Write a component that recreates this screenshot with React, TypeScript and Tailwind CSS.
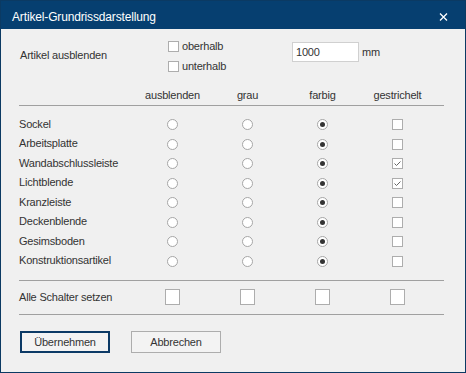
const rows = [
  { name: 'Sockel', dashed: false },
  { name: 'Arbeitsplatte', dashed: false },
  { name: 'Wandabschlussleiste', dashed: true },
  { name: 'Lichtblende', dashed: true },
  { name: 'Kranzleiste', dashed: false },
  { name: 'Deckenblende', dashed: false },
  { name: 'Gesimsboden', dashed: false },
  { name: 'Konstruktionsartikel', dashed: false },
];

function Radio({ checked }: { checked?: boolean }) {
  return (
    <span className="flex h-[11px] w-[11px] items-center justify-center rounded-full border border-[#a6a6a6] bg-white">
      {checked && <span className="h-[5px] w-[5px] rounded-full bg-[#333333]" />}
    </span>
  );
}

function Check({ checked, big }: { checked?: boolean; big?: boolean }) {
  return (
    <span
      className={
        big
          ? 'flex h-[16px] w-[15px] items-center justify-center border border-[#adadad] bg-white'
          : 'flex h-[11px] w-[11px] items-center justify-center border border-[#adadad] bg-white'
      }
    >
      {checked && (
        <svg width="9" height="9" viewBox="0 0 9 9">
          <path d="M1.5 4.5 L3.5 6.5 L7.5 2.5" fill="none" stroke="#666666" strokeWidth="1" />
        </svg>
      )}
    </span>
  );
}

function Cell({ children }: { children: React.ReactNode }) {
  return <div className="flex items-center justify-center">{children}</div>;
}

export default function App() {
  return (
    <div
      className="flex h-[373px] w-[466px] flex-col border border-[#0b3a63] bg-[#f0f0f0] text-[11px] tracking-[-0.2px] text-[#333333]"
      style={{ fontFamily: '"Liberation Sans", Arial, sans-serif' }}
    >
      <div className="flex h-[28px] items-center justify-between bg-[#063f70] pl-[11px] pr-[17px] pt-[4px] text-white">
        <span className="text-[12px] tracking-[-0.15px]">Artikel-Grundrissdarstellung</span>
        <svg width="9" height="8" viewBox="0 0 9 8">
          <path d="M1 0.5 L8 7.5 M8 0.5 L1 7.5" stroke="white" strokeWidth="1.3" />
        </svg>
      </div>

      <div className="flex flex-col pl-[18px]">
        <div className="flex pt-[7px]">
          <div className="flex w-[149px] items-center pl-[1px] pb-[2px]">Artikel ausblenden</div>
          <div className="flex w-[124px] flex-col">
            <label className="flex h-[20px] items-center gap-[3px]">
              <Check />
              <span>oberhalb</span>
            </label>
            <label className="flex h-[20px] items-center gap-[3px]">
              <Check />
              <span>unterhalb</span>
            </label>
          </div>
          <div className="mt-[6px] flex h-[20px] items-center gap-[3px] self-start">
            <div className="flex h-[20px] w-[67px] items-center border border-[#d0d0d0] bg-white pl-[3px]">1000</div>
            <span>mm</span>
          </div>
        </div>

        <div className="mt-[9px] grid h-[20px] grid-cols-[116px_75px_75px_75px_75px] items-center">
          <div />
          <div className="text-center">ausblenden</div>
          <div className="text-center">grau</div>
          <div className="text-center">farbig</div>
          <div className="text-center">gestrichelt</div>
        </div>
        <div className="h-px w-[425px] bg-[#a0a0a0]" />

        <div className="mt-[9px] flex flex-col">
          {rows.map((r) => (
            <div key={r.name} className="grid h-[19.5px] grid-cols-[116px_75px_75px_75px_75px] items-center">
              <div className="pb-[2px]">{r.name}</div>
              <Cell>
                <Radio />
              </Cell>
              <Cell>
                <Radio />
              </Cell>
              <Cell>
                <Radio checked />
              </Cell>
              <Cell>
                <Check checked={r.dashed} />
              </Cell>
            </div>
          ))}
        </div>
        <div className="mt-[9px] h-px w-[425px] bg-[#a0a0a0]" />

        <div className="mt-[8px] grid h-[16px] grid-cols-[116px_75px_75px_75px_75px] items-center">
          <div>Alle Schalter setzen</div>
          <Cell>
            <Check big />
          </Cell>
          <Cell>
            <Check big />
          </Cell>
          <Cell>
            <Check big />
          </Cell>
          <Cell>
            <Check big />
          </Cell>
        </div>
        <div className="mt-[9px] h-px w-[425px] bg-[#a0a0a0]" />

        <div className="mt-[16px] flex gap-[21px] pl-[1px]">
          <button className="h-[22px] w-[90px] border-2 border-[#0c3a66] bg-[#f3f3f3] text-center">Übernehmen</button>
          <button className="h-[22px] w-[90px] border border-[#adadad] bg-[#f3f3f3] text-center">Abbrechen</button>
        </div>
      </div>
    </div>
  );
}
